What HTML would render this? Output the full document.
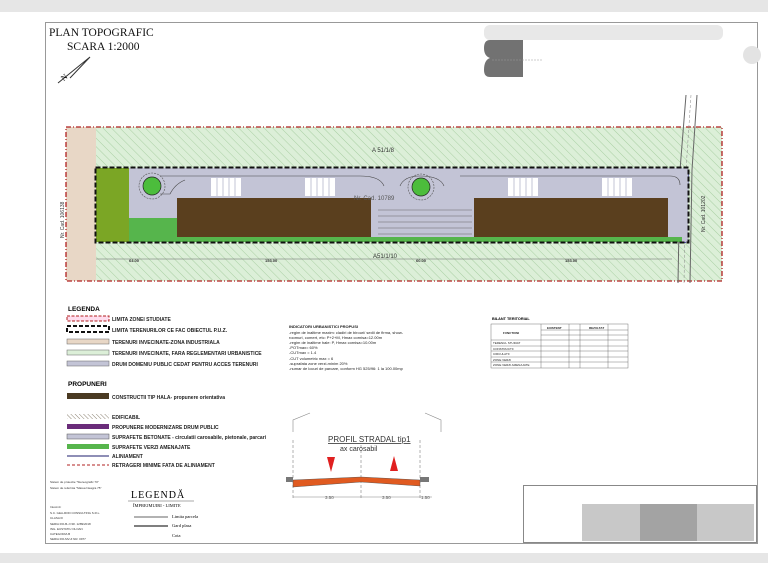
<!DOCTYPE html>
<html><head><meta charset="utf-8"><style>
html,body{margin:0;padding:0;background:#fff}
svg{display:block}
text{font-family:"Liberation Sans",sans-serif}
.s{font-family:"Liberation Serif",serif}
.lg{font-size:5px;font-weight:bold;fill:#222}
</style></head><body>
<svg width="768" height="563" viewBox="0 0 768 563" xmlns="http://www.w3.org/2000/svg">
<defs>
<pattern id="h" width="6" height="6" patternUnits="userSpaceOnUse" patternTransform="rotate(-45)">
<rect width="6" height="6" fill="#dcefd8"/><line x1="0" y1="0" x2="0" y2="6" stroke="#a9cfa3" stroke-width="1"/></pattern>
<pattern id="e" width="3" height="3" patternUnits="userSpaceOnUse" patternTransform="rotate(-45)">
<rect width="3" height="3" fill="#fff"/><line x1="0" y1="0" x2="0" y2="3" stroke="#8a8070" stroke-width="1"/></pattern>
</defs>
<rect width="768" height="12" fill="#e6e6e6"/>
<rect y="553" width="768" height="10" fill="#e6e6e6"/>
<rect x="45.5" y="22.5" width="712" height="521" fill="#fff" stroke="#999"/>
<text x="49" y="36" class="s" font-size="11.5" fill="#111">PLAN TOPOGRAFIC</text>
<text x="67" y="50" class="s" font-size="11.5" fill="#111">SCARA 1:2000</text>
<path d="M58 83 L90 57 L70 78" stroke="#333" fill="none"/>
<text x="61" y="80" class="s" font-size="8" transform="rotate(-40 64 77)">N</text>
<rect x="484" y="25" width="239" height="15" rx="6" fill="#e8e8e8"/>
<path d="M490 40 H523 V77 H490 Q484 77 484 70 Q484 60 490 58 Q484 56 484 48 Q484 40 490 40Z" fill="#727272"/>
<line x1="492" y1="60" x2="542" y2="60" stroke="#999" stroke-width=".6" stroke-dasharray="2 1"/>
<circle cx="752" cy="55" r="9" fill="#e3e3e3"/>
<rect x="66" y="127" width="656" height="154" fill="url(#h)"/>
<rect x="66" y="127" width="30" height="154" fill="#e8d7c6"/>
<rect x="66" y="127" width="656" height="154" fill="none" stroke="#b02020" stroke-width="1.3" stroke-dasharray="5 2 1 2"/>
<path d="M686 95 L680 170 L678 283 M697 95 L692 170 L690 283" stroke="#666" fill="none"/>
<path d="M691 95 L686 170 L684 283" stroke="#888" fill="none" stroke-width=".5" stroke-dasharray="3 2"/>
<path d="M683 170 L689 170 L686 243 L680 243Z" fill="#5a54b0"/>
<rect x="96" y="168" width="592" height="74" fill="#c3c4d6"/>
<rect x="96" y="168" width="33" height="74" fill="#7ba625"/>
<rect x="129" y="218" width="48" height="24" fill="#56b54c"/>
<rect x="177" y="198" width="194" height="39" fill="#5a3f1e"/>
<rect x="474" y="198" width="194" height="39" fill="#5a3f1e"/>
<rect x="129" y="237" width="553" height="5" fill="#56b54c"/>
<path d="M160 176 H360 Q380 176 384 186 M400 186 Q404 176 420 176 Q440 176 444 186 M460 176 H670 Q680 176 680 185 M160 194 H170 Q175 184 185 180" stroke="#444" fill="none" stroke-width=".6"/>
<circle cx="152" cy="186" r="13" fill="none" stroke="#555" stroke-width=".6" stroke-dasharray="2 1"/>
<circle cx="152" cy="186" r="9" fill="#4cbd3c" stroke="#222" stroke-width=".7"/>
<circle cx="421" cy="187" r="13" fill="none" stroke="#555" stroke-width=".6" stroke-dasharray="2 1"/>
<circle cx="421" cy="187" r="9" fill="#4cbd3c" stroke="#222" stroke-width=".7"/>
<g fill="#fff"><rect x="211" y="178" width="30" height="18"/><rect x="305" y="178" width="30" height="18"/><rect x="508" y="178" width="30" height="18"/><rect x="602" y="178" width="30" height="18"/></g>
<g stroke="#c3c4d6" stroke-width="1"><path d="M217 178V196M223 178V196M229 178V196M235 178V196M311 178V196M317 178V196M323 178V196M329 178V196M514 178V196M520 178V196M526 178V196M532 178V196M608 178V196M614 178V196M620 178V196M626 178V196"/></g>
<g stroke="#666" stroke-width=".5"><path d="M378 210H472M378 216H472M378 222H472M378 228H472M378 234H472"/></g>
<rect x="95.5" y="167.5" width="593" height="75" fill="none" stroke="#111" stroke-width="2" stroke-dasharray="5 2"/>
<text x="372" y="152" font-size="6" fill="#333">A 51/1/8</text>
<text x="373" y="258" font-size="6" fill="#333">A51/1/10</text>
<text x="354" y="200" font-size="6" fill="#555">Nr. Cad. 10789</text>
<text x="64" y="238" font-size="5" fill="#333" transform="rotate(-90 64 238)">Nr. Cad. 106138</text>
<text x="705" y="232" font-size="5" fill="#333" transform="rotate(-90 705 232)">Nr. Cad. 101202</text>
<line x1="96" y1="259" x2="672" y2="259" stroke="#666" stroke-width=".5"/>
<g font-size="4" font-weight="bold" fill="#333"><text x="129" y="262">64.00</text><text x="265" y="262">153.00</text><text x="416" y="262">60.00</text><text x="565" y="262">153.00</text></g>
<text x="68" y="311" font-size="6.5" font-weight="bold">LEGENDA</text>
<rect x="67" y="316" width="42" height="5" fill="#fde" stroke="#b02020" stroke-dasharray="3 1.5"/>
<text x="112" y="321" class="lg">LIMITA ZONEI STUDIATE</text>
<rect x="67" y="326" width="42" height="6" fill="none" stroke="#111" stroke-width="2" stroke-dasharray="4 2"/>
<text x="112" y="332" class="lg">LIMITA TERENURILOR CE FAC OBIECTUL P.U.Z.</text>
<rect x="67" y="339" width="42" height="5" fill="#e8d7c6" stroke="#666" stroke-width=".5"/>
<text x="112" y="344" class="lg">TERENURI INVECINATE-ZONA INDUSTRIALA</text>
<rect x="67" y="350" width="42" height="5" fill="#dcefd8" stroke="#666" stroke-width=".5"/>
<text x="112" y="355" class="lg">TERENURI INVECINATE, FARA REGLEMENTARI URBANISTICE</text>
<rect x="67" y="361" width="42" height="5" fill="#c3c4d6" stroke="#666" stroke-width=".5"/>
<text x="112" y="366" class="lg">DRUM DOMENIU PUBLIC CEDAT PENTRU ACCES TERENURI</text>
<text x="68" y="386" font-size="6.5" font-weight="bold">PROPUNERI</text>
<rect x="67" y="393" width="42" height="6" fill="#4a3a22"/>
<text x="112" y="399" class="lg">CONSTRUCTII TIP HALA- propunere orientativa</text>
<rect x="67" y="414" width="42" height="5" fill="url(#e)"/>
<text x="112" y="419" class="lg">EDIFICABIL</text>
<rect x="67" y="424" width="42" height="5" fill="#6a2c7a"/>
<text x="112" y="429" class="lg">PROPUNERE MODERNIZARE DRUM PUBLIC</text>
<rect x="67" y="434" width="42" height="5" fill="#c3c4d6" stroke="#555" stroke-width=".5"/>
<text x="112" y="439" class="lg">SUPRAFETE BETONATE - circulatii carosabile, pietonale, parcari</text>
<rect x="67" y="444" width="42" height="5" fill="#56b54c"/>
<text x="112" y="449" class="lg">SUPRAFETE VERZI AMENAJATE</text>
<line x1="67" y1="456" x2="109" y2="456" stroke="#4a4a8a" stroke-width="1.2"/>
<text x="112" y="458" class="lg">ALINIAMENT</text>
<line x1="67" y1="465" x2="109" y2="465" stroke="#b02020" stroke-dasharray="3 2"/>
<text x="112" y="467" class="lg">RETRAGERI MINIME FATA DE ALINIAMENT</text>
<g class="s" font-size="3" fill="#333"><text x="50" y="483">Sistem de proiectie "Stereografic 70"</text><text x="50" y="489">Sistem de referinta "Marea Neagra 75"</text>
<text x="50" y="508">Intocmit:</text><text x="50" y="514">S.C. GEA-ROD CONSULTING S.R.L.</text><text x="50" y="519">CLASA III</text><text x="50" y="525">SERIA RO-B-J NR. 1289/2018</text><text x="50" y="530">ING. EUSTATIU OLOAN</text><text x="50" y="535">CATEGORIA B</text><text x="50" y="540">SERIA RO-MV-Z NR. 0977</text></g>
<text x="131" y="498" class="s" font-size="10" letter-spacing="1">LEGENDĂ</text>
<line x1="128" y1="501" x2="194" y2="501" stroke="#555" stroke-width=".5"/>
<text x="133" y="507" class="s" font-size="4.5">ÎMPREJMUIRI - LIMITE</text>
<line x1="134" y1="517" x2="168" y2="517" stroke="#333" stroke-width=".7"/><text x="172" y="518" class="s" font-size="4.5">Limita parcela</text>
<line x1="134" y1="526" x2="168" y2="526" stroke="#333" stroke-width="1.2"/><text x="172" y="527" class="s" font-size="4.5">Gard plasa</text>
<text x="172" y="537" class="s" font-size="4.5">Cota</text>
<g font-size="4" fill="#222"><text x="289" y="328" font-weight="bold">INDICATORI URBANISTICI PROPUSI</text>
<text x="289" y="334">-regim de inaltime maxim: cladiri de birouri/ sedii de firma, show-</text>
<text x="289" y="339">roomuri,  comert, etc: P+2+M, Hmax cornisa=12.00m</text>
<text x="289" y="344">-regim de inaltime hale: P,  Hmax cornisa=10.00m</text>
<text x="289" y="349">-POTmax= 60%</text><text x="289" y="354">-CUTmax = 1.4</text>
<text x="289" y="360">-CUT volumetric max = 6</text><text x="289" y="365">-suprafata zone verzi-minim 20%</text>
<text x="289" y="370">-numar de locuri de parcare, conform HG 525/96: 1 la 100.00mp</text></g>
<text x="492" y="320" font-size="3.8" font-weight="bold">BILANT TERITORIAL</text>
<g fill="none" stroke="#555" stroke-width=".4"><rect x="491" y="324" width="137" height="44"/>
<path d="M541 324V368M569 324V368M580 324V368M608 324V368M541 330H628M541 335H628M491 340H628M491 346H628M491 351H628M491 357H628M491 362H628"/></g>
<g font-size="3" fill="#222"><text x="503" y="334" font-weight="bold">FUNCTIUNI</text><text x="547" y="329" font-weight="bold">EXISTENT</text><text x="589" y="329" font-weight="bold">REZULTAT</text>
<text x="493" y="344">TERENUL STUDIAT</text><text x="493" y="350">CONSTRUCTII</text><text x="493" y="355">CIRCULATII</text><text x="493" y="361">ZONE VERZI</text><text x="493" y="366">ZONE VERZI AMENAJATE</text></g>
<path d="M293 432 L293 420 L310 413 M425 413 L441 420 L441 432" stroke="#888" fill="none" stroke-width=".6"/>
<text x="328" y="442" font-size="8" fill="#333" text-decoration="underline">PROFIL STRADAL tip1</text>
<text x="340" y="451" font-size="7" fill="#333">ax carosabil</text>
<path d="M293 440V500M361 445V500M420 440V500" stroke="#666" stroke-dasharray="3 2" stroke-width=".5"/>
<polygon points="327,457 335,457 331,472" fill="#e02020"/><polygon points="394,456 398,471 390,471" fill="#e02020"/>
<polygon points="293,480 361,477 420,480 420,486 361,482 293,487" fill="#e05a20" stroke="#444" stroke-width=".4"/>
<rect x="286" y="477" width="7" height="5" fill="#777"/><rect x="420" y="477" width="9" height="5" fill="#777"/>
<g font-size="4.5" fill="#555"><text x="325" y="499">3.50</text><text x="382" y="499">3.50</text><text x="421" y="499">1.50</text></g>
<line x1="293" y1="497" x2="432" y2="497" stroke="#666" stroke-width=".4"/>
<rect x="523.5" y="485.5" width="233" height="57" fill="#fff" stroke="#888"/>
<rect x="582" y="504" width="58" height="37" fill="#c8c8c8"/>
<rect x="640" y="504" width="57" height="37" fill="#a3a3a3"/>
<rect x="697" y="504" width="57" height="37" fill="#c8c8c8"/>
</svg>
</body></html>
